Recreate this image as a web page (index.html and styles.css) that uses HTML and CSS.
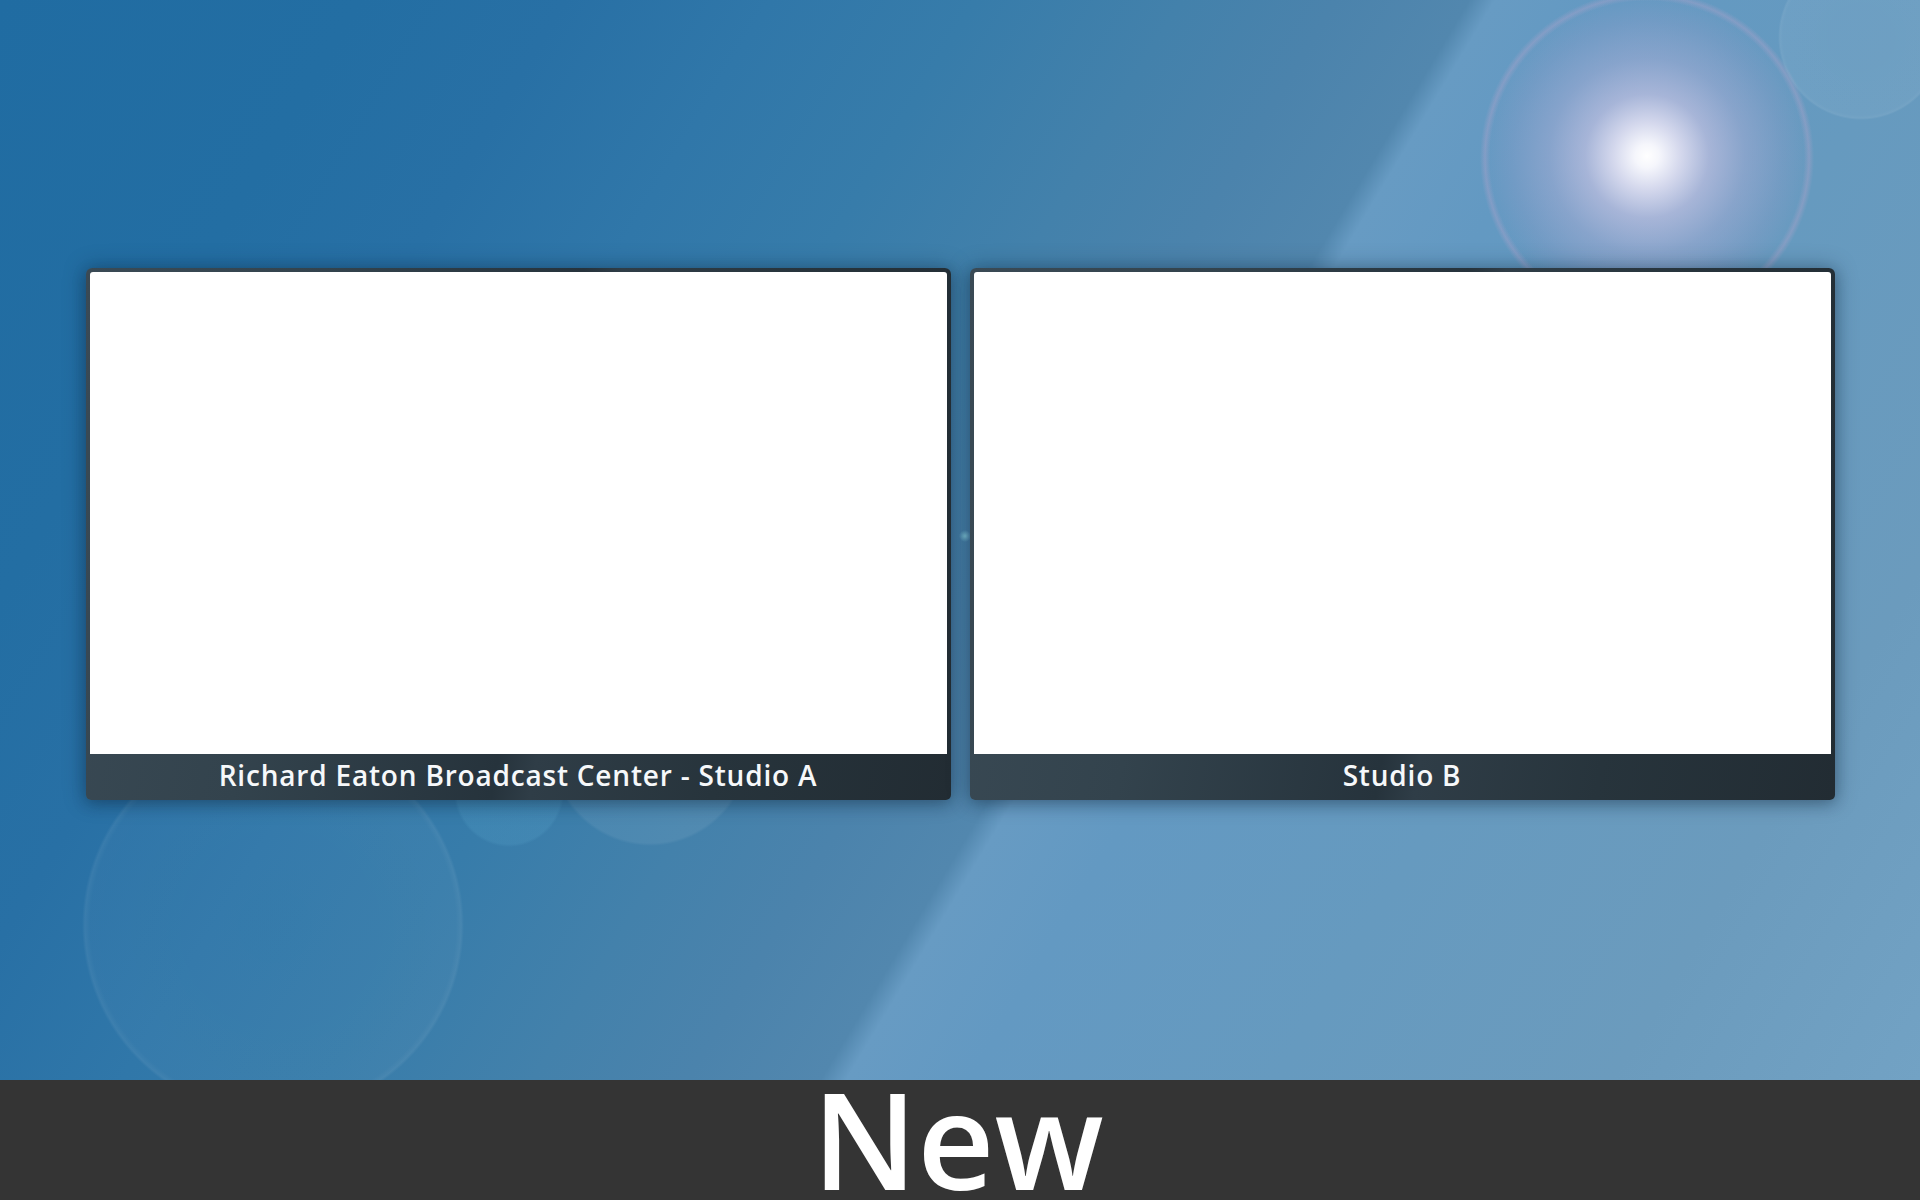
FILE: index.html
```html
<!DOCTYPE html>
<html lang="en">
<head>
<meta charset="utf-8">
<title>Studios</title>
<link rel="stylesheet" href="styles.css">
</head>
<body>
<div class="page">
  <main class="stage">
    <div class="cards">
      <section class="card">
        <div class="screen"></div>
        <div class="caption">Richard Eaton Broadcast Center - Studio A</div>
      </section>
      <section class="card">
        <div class="screen"></div>
        <div class="caption">Studio B</div>
      </section>
    </div>
  </main>
  <footer class="bar">
    <div class="bar-title">New</div>
  </footer>
</div>
</body>
</html>
```
FILE: styles.css
```css
html, body {
  margin: 0;
  padding: 0;
}
body {
  width: 1920px;
  height: 1200px;
  overflow: hidden;
  font-family: "Open Sans", "Noto Sans", "Liberation Sans", sans-serif;
  background: #343434;
}
.page {
  display: flex;
  flex-direction: column;
  width: 1920px;
  height: 1200px;
}
.stage {
  height: 1080px;
  flex: none;
  overflow: hidden;
  background:
    radial-gradient(circle at 1647px 156px, #ffffff 0, rgba(253,251,255,0.95) 12px, rgba(236,229,246,0.82) 34px, rgba(208,198,230,0.62) 62px, rgba(184,178,218,0.42) 98px, rgba(165,162,208,0.22) 135px, rgba(155,158,204,0.08) 155px, rgba(155,158,204,0) 166px),
    radial-gradient(circle at 1647px 158px, rgba(210,165,205,0) 157px, rgba(216,168,208,0.26) 162px, rgba(210,165,205,0) 167px),
    radial-gradient(circle at 1861px 37px, rgba(255,255,255,0.05) 0, rgba(255,255,255,0.06) 78px, rgba(255,255,255,0.09) 81px, rgba(255,255,255,0) 83px),
    radial-gradient(circle at 273px 925px, rgba(255,255,255,0.02) 0, rgba(255,255,255,0.03) 183px, rgba(255,255,255,0.07) 188px, rgba(255,255,255,0) 191px),
    radial-gradient(circle at 509px 792px, rgba(110,190,225,0.14) 52px, rgba(110,190,225,0) 55px),
    radial-gradient(circle at 650px 746px, rgba(255,255,255,0.07) 97px, rgba(255,255,255,0) 100px),
    radial-gradient(circle at 965px 536px, rgba(150,225,235,0.7) 0, rgba(150,225,235,0) 6px),
    linear-gradient(121deg, #206ca2 0%, #236ea3 14%, #2870a5 22%, #3077a9 30%, #377caa 38%, #4381ab 46%, #4b83ac 52%, #5287ae 57.2%, #679bc3 58.2%, #6399c2 63%, #669abf 75%, #6b9bbd 88%, #72a2c4 100%);
}
.cards {
  display: flex;
  justify-content: center;
  gap: 19px;
  padding-top: 268px;
}
.card {
  width: 865px;
  display: flex;
  flex-direction: column;
  border-radius: 6px 6px 5px 5px;
  overflow: hidden;
  background: linear-gradient(100deg, #3a4a55 0%, #33434d 25%, #26333c 52%, #2f3d47 56%, #27343c 75%, #222c33 100%);
  box-shadow: 0 0 22px rgba(10, 30, 50, 0.35), 0 4px 14px rgba(10, 30, 50, 0.25);
}
.screen {
  height: 482px;
  margin: 4px 4px 0 4px;
  background: #ffffff;
  border-radius: 3px 3px 0 0;
}
.caption {
  height: 46px;
  line-height: 42px;
  text-align: center;
  color: #f6f8fa;
  font-size: 28px;
  font-weight: 600;
  letter-spacing: 0.8px;
  white-space: nowrap;
}
.bar {
  height: 120px;
  flex: none;
  overflow: hidden;
  background: #343434;
  text-align: center;
}
.bar-title {
  color: #ffffff;
  font-size: 134px;
  font-weight: 600;
  line-height: 116px;
  letter-spacing: 0;
  padding-right: 4px;
}
```
